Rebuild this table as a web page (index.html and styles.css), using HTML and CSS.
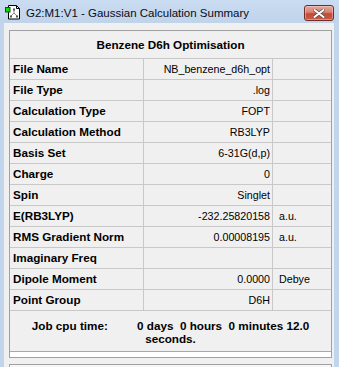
FILE: index.html
```html
<!DOCTYPE html>
<html>
<head>
<meta charset="utf-8">
<link rel="stylesheet" href="styles.css">
</head>
<body>
<div class="window">
  <div class="titlebar">
    <svg class="app-icon" viewBox="0 0 17 16" width="17" height="16">
      <path d="M3.5 1.5h8l3 3v10.5h-11z" fill="#fff" stroke="#000"/>
      <path d="M11.5 1.5v3h3" fill="none" stroke="#000"/>
      <path d="M9 5.5v3.5M9 9l-3 3M9 9l3 3" stroke="#8a8a8a" fill="none"/>
      <rect x="8" y="4.5" width="2" height="2" fill="#555"/>
      <rect x="5" y="11.5" width="2" height="2" fill="#555"/>
      <rect x="11" y="11.5" width="2" height="2" fill="#555"/>
      <rect x="0.5" y="3.5" width="4.5" height="4.5" fill="#16d616" stroke="#0a5a0a"/>
    </svg>
    <span class="title">G2:M1:V1 - Gaussian Calculation Summary</span>
    <div class="close">
      <svg viewBox="0 0 12 9" width="12" height="9">
        <path d="M1.5 1L10.5 8M10.5 1L1.5 8" stroke="#5a4a4a" stroke-width="3.4" stroke-linecap="round"/>
        <path d="M1.5 1L10.5 8M10.5 1L1.5 8" stroke="#fff" stroke-width="2" stroke-linecap="round"/>
      </svg>
    </div>
  </div>
  <div class="client">
    <div class="summary">
      <div class="head">Benzene D6h Optimisation</div>
      <div class="row"><div class="lbl">File Name</div><div class="val">NB_benzene_d6h_opt</div><div class="unit"></div></div>
      <div class="row"><div class="lbl">File Type</div><div class="val">.log</div><div class="unit"></div></div>
      <div class="row"><div class="lbl">Calculation Type</div><div class="val">FOPT</div><div class="unit"></div></div>
      <div class="row"><div class="lbl">Calculation Method</div><div class="val">RB3LYP</div><div class="unit"></div></div>
      <div class="row"><div class="lbl">Basis Set</div><div class="val">6-31G(d,p)</div><div class="unit"></div></div>
      <div class="row"><div class="lbl">Charge</div><div class="val">0</div><div class="unit"></div></div>
      <div class="row"><div class="lbl">Spin</div><div class="val">Singlet</div><div class="unit"></div></div>
      <div class="row"><div class="lbl">E(RB3LYP)</div><div class="val">-232.25820158</div><div class="unit">a.u.</div></div>
      <div class="row"><div class="lbl">RMS Gradient Norm</div><div class="val">0.00008195</div><div class="unit">a.u.</div></div>
      <div class="row"><div class="lbl">Imaginary Freq</div><div class="val"></div><div class="unit"></div></div>
      <div class="row"><div class="lbl">Dipole Moment</div><div class="val">0.0000</div><div class="unit">Debye</div></div>
      <div class="row"><div class="lbl">Point Group</div><div class="val">D6H</div><div class="unit"></div></div>
      <div class="job">Job cpu time:&nbsp;&nbsp;&nbsp;&nbsp;&nbsp;&nbsp;&nbsp;&nbsp; 0 days&nbsp; 0 hours&nbsp; 0 minutes 12.0 seconds.</div>
    </div>
    <div class="lower"></div>
  </div>
</div>
</body>
</html>
```
FILE: styles.css
```css
html, body {
  margin: 0;
  padding: 0;
}
body {
  width: 339px;
  height: 367px;
  overflow: hidden;
  background: #c1d5ec;
  font-family: "Liberation Sans", Arial, sans-serif;
  color: #000;
}
.window {
  display: flex;
  flex-direction: column;
  height: 367px;
}
.titlebar {
  height: 23px;
  flex: none;
  display: flex;
  align-items: flex-start;
  background: linear-gradient(#cadcf1, #bfd3ea);
}
.app-icon {
  margin: 4px 0 0 5px;
  flex: none;
}
.title {
  margin: 4px 0 0 4px;
  font-size: 11.5px;
  line-height: 19px;
  color: #0b0b18;
  white-space: nowrap;
}
.close {
  margin: 5px 5px 0 auto;
  width: 30px;
  height: 16px;
  box-sizing: border-box;
  border: 1px solid #6e2b28;
  border-radius: 3px;
  background: linear-gradient(#e6aa9f 0%, #d7806f 45%, #c44a36 55%, #c85a45 100%);
  display: flex;
  align-items: center;
  justify-content: center;
  box-shadow: inset 0 0 0 1px rgba(255, 220, 210, 0.45);
}
.client {
  flex: 1;
  margin: 0 5px 0 4px;
  padding: 7px 2px 0 5px;
  background: #f0f0f0;
}
.summary {
  width: 323px;
  height: 328px;
  box-sizing: border-box;
  border: 1px solid #a0a0a0;
  background: #fff;
}
.head {
  height: 28px;
  box-sizing: border-box;
  border-bottom: 1px solid #c8c8c8;
  background: #f0f0f0;
  text-align: center;
  font-weight: bold;
  font-size: 11.7px;
  line-height: 27px;
}
.row {
  display: grid;
  grid-template-columns: 134px 129px 1fr;
  height: 21px;
  box-sizing: border-box;
  border-bottom: 1px solid #c8c8c8;
  background: #f0f0f0;
}
.lbl, .val, .unit {
  line-height: 20px;
  white-space: nowrap;
  overflow: hidden;
}
.lbl {
  border-right: 1px solid #c8c8c8;
  padding-left: 3px;
  font-weight: bold;
  font-size: 11.7px;
}
.val {
  border-right: 1px solid #c8c8c8;
  padding-right: 2px;
  text-align: right;
  font-size: 10.7px;
}
.unit {
  padding-left: 6px;
  font-size: 10.7px;
}
.job {
  height: 41px;
  box-sizing: border-box;
  border-bottom: 1px solid #a8a8a8;
  background: #f0f0f0;
  padding: 8px 4px 0;
  text-align: center;
  font-weight: bold;
  font-size: 11.7px;
  line-height: 13px;
}
.lower {
  margin-top: 6px;
  width: 323px;
  height: 10px;
  box-sizing: border-box;
  border: 1px solid #a0a0a0;
  background: #f7f7f7;
}
```
